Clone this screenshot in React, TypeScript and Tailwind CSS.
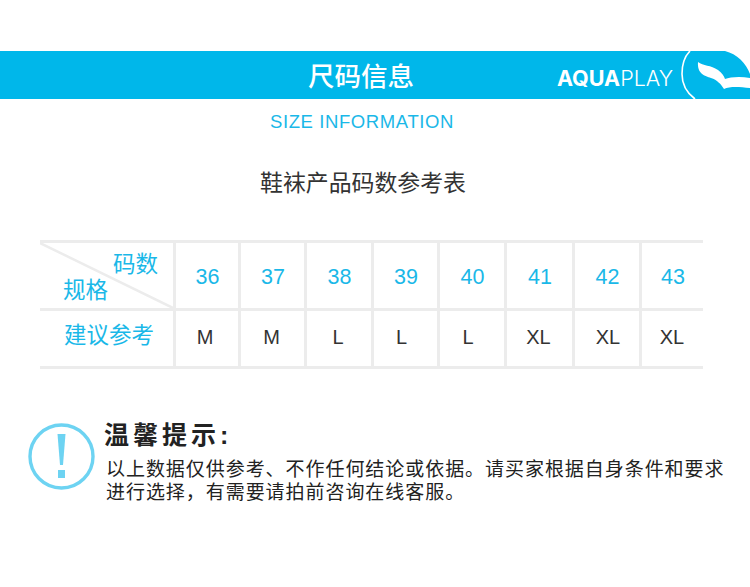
const SIZES = ['36', '37', '38', '39', '40', '41', '42', '43']
const FITS = ['M', 'M', 'L', 'L', 'L', 'XL', 'XL', 'XL']
const WIDTHS = ['w-[65px]', 'w-[66px]', 'w-[67px]', 'w-[66px]', 'w-[67px]', 'w-[68px]', 'w-[67px]', 'w-[64px]']
const FIT_PADS = ['pr-[4px]', 'pr-[2px]', 'pr-[2px]', 'pr-[8px]', 'pr-[8px]', 'pr-[2px]', 'pl-[2px]', 'pr-[1px]']
const SANS = "font-['Liberation_Sans','Noto_Sans_CJK_SC',sans-serif]"

function Logo() {
  return (
    <svg width="75" height="48" viewBox="0 0 75 48" className="shrink-0">
      <path d="M15 0C9 6 7 15 7 23c0 10 5 19 13 25" fill="none" stroke="#fff" strokeWidth="1.6" />
      <path d="M50 0C62 3 71 12 75 23V0Z" fill="#fff" />
      <path d="M23 11C28 15 36 14 43 19C47 22 49 25 50 28C55 26 65 25 75 27V37C65 36 55 35 49 38C46 33 42 29 36 27C30 25 22 23 23 11Z" fill="#fff" />
    </svg>
  )
}

function App() {
  return (
    <div className={`w-[750px] h-[587px] bg-white overflow-hidden ${SANS}`}>
      <div className="h-[51px]" />
      {/* Header band */}
      <div className="flex h-[48px] items-center bg-[#00b7ea]">
        <h1 className="ml-[308px] mt-[4px] text-[26.5px] font-medium leading-none text-white">尺码信息</h1>
        <div className="ml-auto mr-[2px] mt-[8px] flex items-baseline font-['Inter',sans-serif] text-[21.5px] leading-none text-white">
          <span className="font-bold">AQUA</span>
          <span className="font-light">PLAY</span>
        </div>
        <Logo />
      </div>

      <p className="mt-[12px] ml-[270px] text-[18.5px] leading-[22px] tracking-[0.6px] text-[#1ab8e8]">SIZE INFORMATION</p>
      <h2 className="mt-[36px] ml-[260px] text-[22.9px] leading-[28px] text-[#333]">鞋袜产品码数参考表</h2>

      {/* Size table */}
      <div className="mt-[43px] ml-[40px] w-[663px] border-y-[3px] border-[#ececec]">
        <div className="flex h-[68px] border-b-[3px] border-[#ececec]">
          <div className="relative w-[133px] shrink-0 text-[22.5px] leading-none text-[#1ab8e8]">
            <svg width="133" height="65" className="absolute inset-0">
              <line x1="0" y1="0" x2="133" y2="65" stroke="#ececec" strokeWidth="2.5" />
            </svg>
            <span className="absolute left-[73px] top-[11px]">码数</span>
            <span className="absolute left-[23px] top-[37px]">规格</span>
          </div>
          {SIZES.map((s, i) => (
            <div key={s} className={`flex items-center justify-center border-l-[3px] border-[#ececec] pt-[3px] pl-[1px] text-[21.5px] text-[#1ab8e8] ${WIDTHS[i]}`}>
              {s}
            </div>
          ))}
        </div>
        <div className="flex h-[55px]">
          <div className="flex w-[133px] shrink-0 items-center pb-[4px] pl-[24px] text-[22.5px] leading-none text-[#1ab8e8]">建议参考</div>
          {FITS.map((f, i) => (
            <div key={i} className={`flex items-center justify-center border-l-[3px] border-[#ececec] pb-[3px] text-[20px] text-[#333] ${WIDTHS[i]} ${FIT_PADS[i]}`}>
              {f}
            </div>
          ))}
        </div>
      </div>

      {/* Notice */}
      <div className="mt-[52px] flex pl-[28px]">
        <svg width="67" height="67" viewBox="0 0 67 67" className="mt-[2px] shrink-0">
          <circle cx="33.5" cy="33.5" r="31.5" fill="none" stroke="#6dd3f2" strokeWidth="3.4" />
          <path d="M29.5 11h8l-2.5 31h-3Z" fill="#6dd3f2" />
          <rect x="30" y="47" width="7" height="8" fill="#6dd3f2" />
        </svg>
        <div className="ml-[9px] text-[#222]">
          <h3 className="-mt-[1px] text-[25px] font-bold leading-[30px] tracking-[4px]">温馨提示:</h3>
          <p className="mt-[8px] ml-[2px] w-[625px] text-[19px] leading-[23px] tracking-[0.95px]">
            以上数据仅供参考、不作任何结论或依据。请买家根据自身条件和要求进行选择，有需要请拍前咨询在线客服。
          </p>
        </div>
      </div>
    </div>
  )
}

export default App
